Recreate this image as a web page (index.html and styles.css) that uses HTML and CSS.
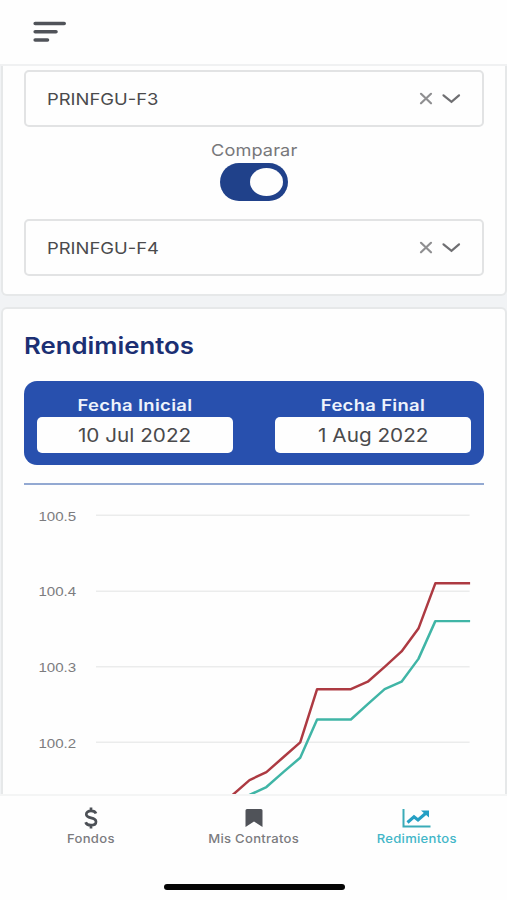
FILE: index.html
```
<!DOCTYPE html>
<html lang="es">
<head>
    <meta charset="UTF-8">
    <meta name="viewport" content="width=device-width, initial-scale=1.0">
    <title>Rendimientos</title>
    <link rel="stylesheet" href="styles.css">
</head>
<body>
    <header class="topbar">
        <svg class="menu-icon" width="34" height="24" viewBox="0 0 34 24">
            <path d="M3.2 3.500H32.2M3.2 11.800H24M3.2 20H15.500"/>
        </svg>
    </header>

    <main class="content">
        <section class="card card-filters">
            <div class="select">
                <span class="select-value">PRINFGU-F3</span>
                <svg class="select-icons" width="44" height="14" viewBox="0 0 44 14">
                    <path class="clear" d="M4 1.800L14 11.300M14 1.800L4 11.300"/>
                    <path class="chevron" d="M26.500 3.300L34.500 9.800L42 3.300"/>
                </svg>
            </div>

            <div class="compare">
                <span class="compare-label">Comparar</span>
                <span class="toggle"><span class="toggle-knob"></span></span>
            </div>

            <div class="select">
                <span class="select-value">PRINFGU-F4</span>
                <svg class="select-icons" width="44" height="14" viewBox="0 0 44 14">
                    <path class="clear" d="M4 1.800L14 11.300M14 1.800L4 11.300"/>
                    <path class="chevron" d="M26.500 3.300L34.500 9.800L42 3.300"/>
                </svg>
            </div>
        </section>

        <section class="card card-chart">
            <h2>Rendimientos</h2>

            <div class="dates">
                <div class="date">
                    <span class="date-label">Fecha Inicial</span>
                    <div class="date-value"><span>10 Jul 2022</span></div>
                </div>
                <div class="date">
                    <span class="date-label">Fecha Final</span>
                    <div class="date-value"><span>1 Aug 2022</span></div>
                </div>
            </div>

            <svg class="chart" width="460" height="312" viewBox="0 0 460 312">
                <g class="grid">
                    <path d="M71 30.500H447M71 107H447M71 183H447M71 259H447"/>
                </g>
                <g class="axis">
                    <text x="13" y="36.500" textLength="38" lengthAdjust="spacingAndGlyphs">100.5</text>
                    <text x="13" y="111.500" textLength="38" lengthAdjust="spacingAndGlyphs">100.4</text>
                    <text x="13" y="188" textLength="38" lengthAdjust="spacingAndGlyphs">100.3</text>
                    <text x="13" y="264.500" textLength="38" lengthAdjust="spacingAndGlyphs">100.2</text>
                </g>
                <polyline class="line line-f4" points="208,320 225.500,312 242.500,304 259.500,289 276.500,274.500 293.500,236 310.500,236 327.500,236 344.500,220.500 361.500,205.500 378.500,198 395.500,175 412.500,137 447.500,137"/>
                <polyline class="line line-f3" points="205,315 225.500,297 242.500,289 259.500,274 276.500,259 293.500,205.500 310.500,205.500 327.500,205.500 344.500,198 361.500,183 378.500,167.500 395.500,144.500 412.500,99 447.500,99"/>
            </svg>
        </section>
    </main>

    <nav class="tabbar">
        <a class="tab">
            <svg width="16" height="22" viewBox="0 0 16 22">
                <path class="dollar" d="M8 0.500V4M8 18V21.500M13 6.500C12.300 4.700 10.400 3.900 8 3.900C5.200 3.900 3.300 5.200 3.300 7.300C3.300 9.700 5.300 10.300 8 10.900C10.900 11.500 13 12.300 13 14.700C13 17 10.900 18.200 8 18.200C5.300 18.200 3.300 17.200 2.600 15.200"/>
            </svg>
            <span>Fondos</span>
        </a>
        <a class="tab">
            <svg width="18" height="22" viewBox="0 0 18 22">
                <path class="bookmark" d="M0.500 3.500Q0.500 2 2 2H16Q17.500 2 17.500 3.500V20L9 14.500L0.500 20Z"/>
            </svg>
            <span>Mis Contratos</span>
        </a>
        <a class="tab active">
            <svg width="30" height="22" viewBox="0 0 30 22">
                <path class="trend-axis" d="M1.500 2V19.500H28.500"/>
                <path class="trend-line" d="M5.500 15.500L12 9.800L16 13L23.500 6.500"/>
                <path class="trend-head" d="M19 3.500H27V10.500Z"/>
            </svg>
            <span>Redimientos</span>
        </a>
    </nav>
    <footer class="home"><span class="home-bar"></span></footer>
</body>
</html>
```
FILE: styles.css
```
* {
    margin: 0;
    padding: 0;
    box-sizing: border-box;
}

body {
    font-family: Inter, "Liberation Sans", sans-serif;
    background: #fefefe;
    color: #4a4a4c;
    height: 900px;
    display: flex;
    flex-direction: column;
    overflow: hidden;
}

svg {
    display: block;
    fill: none;
}

.topbar {
    height: 64px;
    padding: 20px 32px;
    flex-shrink: 0;
}

.menu-icon {
    stroke: #505359;
    stroke-width: 3.6;
    stroke-linecap: round;
}

.content {
    height: 732px;
    flex-shrink: 0;
    display: flex;
    flex-direction: column;
    gap: 11px;
    padding: 0 0 0 1px;
    background: #f1f3f5;
    border-top: 2px solid #f0f1f2;
    border-bottom: 2px solid #f4f5f5;
    overflow: hidden;
}

.card {
    background: #fefefe;
    border: 2px solid #e6e8e9;
    border-radius: 6px;
    padding: 0 21px;
}

.card-filters {
    height: 230px;
    flex-shrink: 0;
    border-top: none;
    border-radius: 0 0 6px 6px;
    padding-top: 4px;
}

.select {
    width: 460px;
    height: 57px;
    display: flex;
    align-items: center;
    justify-content: space-between;
    padding: 0 21px;
    border: 2px solid #e2e3e4;
    border-radius: 5px;
}

/* the app's typeface is wider than Inter, so labels are stretched a bit */
.select-value {
    font-size: 16.5px;
    line-height: 20px;
    transform: scaleX(1.115);
    transform-origin: left;
}

.select-icons {
    stroke-linecap: round;
}

.clear {
    stroke: #8f8f91;
    stroke-width: 2.2;
}

.chevron {
    stroke: #6f6f72;
    stroke-width: 2.2;
}

.compare {
    width: 460px;
    height: 92px;
    display: flex;
    flex-direction: column;
    align-items: center;
    padding-top: 13px;
}

.compare-label {
    font-size: 16.5px;
    line-height: 20px;
    letter-spacing: 0.1px;
    transform: scaleX(1.1);
    color: #77777a;
}

.toggle {
    width: 68px;
    height: 38px;
    margin-top: 3px;
    padding: 5px;
    display: flex;
    justify-content: flex-end;
    border-radius: 19px;
    background: #20418a;
}

.toggle-knob {
    width: 33px;
    height: 28px;
    border-radius: 50%;
    background: #fefefe;
}

.card-chart {
    flex: 1;
    border-bottom: none;
    border-radius: 6px 6px 0 0;
}

h2 {
    margin-top: 22px;
    font-size: 23px;
    line-height: 30px;
    font-weight: 600;
    color: #1b2f73;
    transform: scaleX(1.12);
    transform-origin: left;
}

.dates {
    width: 460px;
    height: 84px;
    margin-top: 20px;
    padding: 14px 13px 0;
    display: flex;
    justify-content: space-between;
    background: #2850ae;
    border-radius: 13px;
}

.date {
    width: 196px;
    text-align: center;
}

.date-label {
    display: block;
    font-size: 16px;
    line-height: 20px;
    font-weight: 600;
    letter-spacing: 0.3px;
    color: #eef3fc;
    transform: scaleX(1.15);
}

.date-value {
    height: 36px;
    margin-top: 2px;
    font-size: 18.5px;
    line-height: 37px;
    background: #fefefe;
    border-radius: 5px;
}

.date-value span {
    display: inline-block;
    transform: scaleX(1.12);
}

.chart {
    margin-top: 18px;
    border-top: 2px solid #93a9d2;
}

.grid {
    stroke: #ebecec;
    stroke-width: 1.5;
}

.axis {
    font-family: "Liberation Sans", sans-serif;
    font-size: 13.5px;
    fill: #7c7c7e;
}

.line {
    stroke-width: 2.5;
    stroke-linejoin: round;
}

.line-f3 {
    stroke: #ad3a42;
}

.line-f4 {
    stroke: #40b5a6;
}

.tabbar {
    height: 72px;
    flex-shrink: 0;
    display: grid;
    grid-template-columns: 163px 163px 163px;
    justify-content: center;
    padding-top: 11px;
}

.tab {
    display: flex;
    flex-direction: column;
    align-items: center;
    font-size: 12px;
    line-height: 16px;
    font-weight: 500;
    letter-spacing: 0.25px;
    color: #7b7b7e;
}

.tab span {
    margin-top: 2px;
    transform: scaleX(1.09);
}

.tab.active {
    color: #42b6c8;
}

.dollar {
    stroke: #4c5056;
    stroke-width: 2.7;
}

.bookmark {
    fill: #505359;
}

.trend-axis {
    stroke: #3aabb8;
    stroke-width: 2;
}

.trend-line {
    stroke: #259fc4;
    stroke-width: 3;
}

.trend-head {
    fill: #259fc4;
}

.home {
    display: flex;
    justify-content: center;
    padding: 16px 0 0 1px;
}

.home-bar {
    width: 181px;
    height: 6px;
    border-radius: 3px;
    background: #050505;
}
```
